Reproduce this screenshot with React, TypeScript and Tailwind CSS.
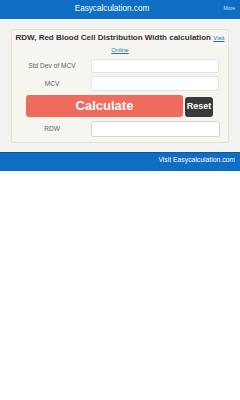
export default function App() {
  return (
    <div className="w-[240px] min-h-[400px] bg-white font-['Liberation_Sans',Arial,sans-serif]">
      <header className="relative flex h-[19px] items-center justify-center bg-[#0d6ec3] pr-[16px]">
        <span className="text-[8.2px] text-white">Easycalculation.com</span>
        <span className="absolute right-[5px] top-[5px] text-[5px] text-[#cfe3f5]">More</span>
      </header>
      <main className="bg-[#f2f2f0] px-[11px] pb-[9px] pt-[10px]">
        <div className="rounded-[3px] border border-[#e3e1da] bg-[#f6f5f0] px-[1px] pb-[5px] pt-[2px]">
          <h1 className="text-center text-[8px] font-bold leading-[11px] text-[#333]">
            RDW, Red Blood Cell Distribution Width calculation{" "}
            <a className="text-[6px] font-normal text-[#2a6fb8] underline">Visit Online</a>
          </h1>
          <div className="mt-[3px] flex flex-col gap-[3px]">
            <div className="flex items-center">
              <label className="w-[78px] text-center text-[6.6px] text-[#666]">Std Dev of MCV</label>
              <div className="h-[14px] w-[128px] rounded-[2px] border border-[#e2e2e2] bg-white" />
            </div>
            <div className="flex items-center">
              <label className="w-[78px] text-center text-[6.6px] text-[#666]">MCV</label>
              <div className="h-[15px] w-[128px] rounded-[2px] border border-[#e2e2e2] bg-white" />
            </div>
          </div>
          <div className="mt-[4px] flex items-end pl-[13px]">
            <button className="h-[22px] w-[157px] rounded-[3px] bg-[#ef6b5d] text-[13px] font-bold text-white">Calculate</button>
            <button className="ml-[2px] h-[20px] w-[28px] rounded-[3px] bg-[#3a3a38] text-[9px] font-bold text-white">Reset</button>
          </div>
          <div className="mt-[4px] flex items-center">
            <label className="w-[78px] text-center text-[6.6px] text-[#666]">RDW</label>
            <div className="h-[16px] w-[129px] rounded-[2px] border border-[#d6d6d6] bg-white" />
          </div>
        </div>
      </main>
      <footer className="flex h-[19px] items-start justify-end border-t border-[#0a5a9e] bg-[#0d6ec3] pr-[5px] pt-[2px]">
        <span className="text-[6.8px] text-white">Visit Easycalculation.com</span>
      </footer>
    </div>
  );
}
